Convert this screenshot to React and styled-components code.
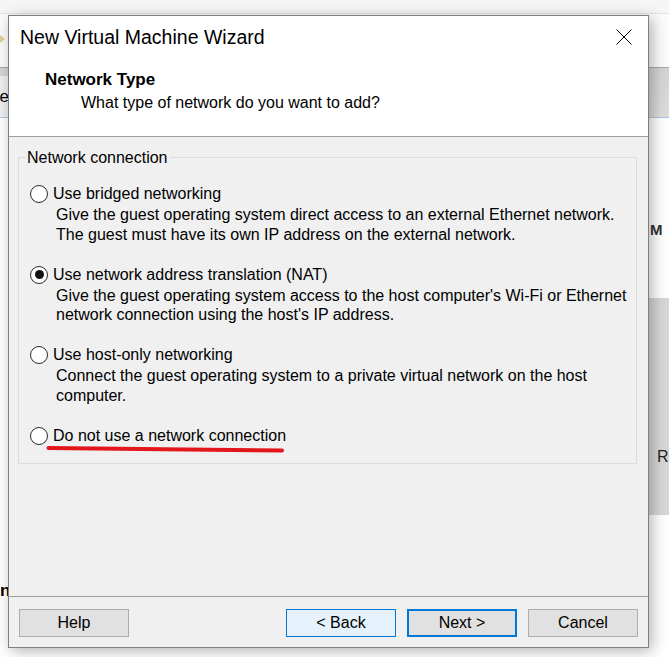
import React from 'react';
import styled, { createGlobalStyle } from 'styled-components';

const GlobalStyle = createGlobalStyle`
  html, body {
    margin: 0;
    padding: 0;
    background: #fff;
  }
  body {
    font-family: "Liberation Sans", Arial, sans-serif;
    color: #000;
  }
`;

const Desktop = styled.div`
  position: relative;
  width: 669px;
  height: 657px;
  overflow: hidden;
  background: #fff;
`;

/* the host application behind the wizard */
const HostApp = styled.div`
  display: flex;
  flex-direction: column;
  height: 100%;
`;

const MenuStrip = styled.div`
  height: 13px;
  background: #f6f6f6;
  border-bottom: 1px solid #e4e4e4;
`;

const AddressRow = styled.div`
  height: 53px;
  display: flex;
  align-items: center;
  padding-bottom: 4px;
  box-sizing: border-box;
  background: #fbfbfb;
`;

const TabBand = styled.div`
  height: 49px;
  display: flex;
  background: linear-gradient(#d3d3d3, #dcdcdc);
  border-top: 1px solid #a8a8a8;
  border-bottom: 1px solid #a9c6e2;
`;

const Tab = styled.div`
  width: 9px;
  margin-top: 8px;
  background: #efefef;
  display: flex;
  align-items: center;
  justify-content: flex-end;
  font-size: 17px;
`;

const HostBody = styled.div`
  flex: 1;
  display: flex;
`;

const LeftRail = styled.div`
  width: 14px;
  display: flex;
  flex-direction: column;
  padding-top: 462px;
  font-weight: bold;
  font-size: 17px;
  line-height: 22px;
`;

const RightRail = styled.div`
  margin-left: auto;
  width: 20px;
  display: flex;
  flex-direction: column;
  padding-top: 102px;
`;

const RailLabel = styled.div`
  font-size: 15px;
  font-weight: bold;
  line-height: 20px;
  color: #333;
  padding-left: 1px;
`;

const RailPanel = styled.div`
  margin-top: 58px;
  height: 217px;
  background: #d6d6d6;
  padding: 149px 0 0 8px;
  box-sizing: border-box;
  font-size: 16px;
  line-height: 20px;
  color: #222;
`;

/* wizard dialog, floating above the host window */
const Wizard = styled.div`
  position: absolute;
  left: 8px;
  top: 15px;
  width: 639px;
  height: 631px;
  border: 1px solid #7f7f7f;
  background: #f0f0f0;
  display: flex;
  flex-direction: column;
  box-shadow: 3px 3px 14px rgba(0, 0, 0, 0.3);
`;

const Header = styled.div`
  background: #fff;
  border-bottom: 1px solid #a0a0a0;
`;

const TitleBar = styled.div`
  height: 42px;
  display: flex;
  align-items: center;
  justify-content: space-between;
  padding-left: 11px;
  font-size: 19.5px;
`;

const CloseButton = styled.div`
  width: 48px;
  height: 42px;
  display: flex;
  align-items: center;
  justify-content: center;
`;

const PageInfo = styled.div`
  padding: 12px 0 23px 36px;
`;

const PageTitle = styled.div`
  font-weight: bold;
  font-size: 17px;
  line-height: 20px;
`;

const PageSubtitle = styled.div`
  margin: 3px 0 0 36px;
  font-size: 16px;
  line-height: 20px;
`;

const Content = styled.div`
  flex: 1;
  padding: 20px 11px 0 9px;
`;

const GroupBox = styled.div`
  border: 1px solid #dcdcdc;
  font-size: 16px;
`;

const GroupLabel = styled.div`
  display: table;
  margin: -10px 0 0 8px;
  padding-right: 2px;
  line-height: 19px;
  background: #f0f0f0;
`;

const OptionList = styled.div`
  display: flex;
  flex-direction: column;
  gap: 20.5px;
  padding: 17px 0 17px 11px;
`;

const Option = styled.div`
  position: relative;
`;

const OptionRow = styled.div`
  display: flex;
  align-items: center;
  gap: 5px;
  height: 20px;
`;

const Radio = styled.span`
  width: 16px;
  height: 16px;
  border: 1px solid #2b2b2b;
  border-radius: 50%;
  background: #fff;
  display: flex;
  align-items: center;
  justify-content: center;

  &::after {
    content: '';
    width: 9px;
    height: 9px;
    border-radius: 50%;
    background: #111;
    display: ${(p) => (p.$checked ? 'block' : 'none')};
  }
`;

const Description = styled.div`
  margin: 1px 0 0 26px;
  line-height: 19.5px;
  white-space: nowrap;
`;

const Underline = styled.svg`
  position: absolute;
  left: 16px;
  top: 19px;
`;

const Footer = styled.div`
  display: flex;
  align-items: center;
  gap: 11px;
  padding: 12px 10px 10px;
  border-top: 1px solid #a0a0a0;
`;

const Spacer = styled.div`
  flex: 1;
`;

const Button = styled.div`
  width: 110px;
  height: 28px;
  box-sizing: border-box;
  display: flex;
  align-items: center;
  justify-content: center;
  font-size: 16px;
  background: ${(p) => (p.$hover ? '#e5f1fb' : '#e1e1e1')};
  border: ${(p) => (p.$default ? '2px solid #0078d7' : p.$hover ? '1px solid #0078d7' : '1px solid #adadad')};
`;

const options = [
  {
    label: 'Use bridged networking',
    lines: [
      'Give the guest operating system direct access to an external Ethernet network.',
      'The guest must have its own IP address on the external network.',
    ],
  },
  {
    label: 'Use network address translation (NAT)',
    checked: true,
    lines: [
      "Give the guest operating system access to the host computer's Wi-Fi or Ethernet",
      "network connection using the host's IP address.",
    ],
  },
  {
    label: 'Use host-only networking',
    lines: ['Connect the guest operating system to a private virtual network on the host', 'computer.'],
  },
  {
    label: 'Do not use a network connection',
    marked: true,
    lines: [],
  },
];

export default function App() {
  return (
    <>
      <GlobalStyle />
      <Desktop>
        <HostApp>
          <MenuStrip />
          <AddressRow>
            <svg width="6" height="8" viewBox="0 0 6 8">
              <path d="M0 0 L5 4 L0 8 Z" fill="#d9cf9a" />
            </svg>
          </AddressRow>
          <TabBand>
            <Tab>e</Tab>
          </TabBand>
          <HostBody>
            <LeftRail>n</LeftRail>
            <RightRail>
              <RailLabel>M</RailLabel>
              <RailPanel>R</RailPanel>
            </RightRail>
          </HostBody>
        </HostApp>

        <Wizard>
          <Header>
            <TitleBar>
              New Virtual Machine Wizard
              <CloseButton>
                <svg width="16" height="16" viewBox="0 0 16 16">
                  <path d="M0.5 0.5 L15.5 15.5 M15.5 0.5 L0.5 15.5" stroke="#000" strokeWidth="1" />
                </svg>
              </CloseButton>
            </TitleBar>
            <PageInfo>
              <PageTitle>Network Type</PageTitle>
              <PageSubtitle>What type of network do you want to add?</PageSubtitle>
            </PageInfo>
          </Header>

          <Content>
            <GroupBox>
              <GroupLabel>Network connection</GroupLabel>
              <OptionList>
                {options.map((opt) => (
                  <Option key={opt.label}>
                    <OptionRow>
                      <Radio $checked={opt.checked} />
                      {opt.label}
                    </OptionRow>
                    {opt.lines.length > 0 && (
                      <Description>
                        {opt.lines.map((line) => (
                          <div key={line}>{line}</div>
                        ))}
                      </Description>
                    )}
                    {opt.marked && (
                      <Underline width="240" height="9" viewBox="0 0 240 9">
                        <path
                          d="M2.5 3 C70 3.5 150 4.5 236 5.5"
                          fill="none"
                          stroke="#e3161c"
                          strokeWidth="4"
                          strokeLinecap="round"
                        />
                      </Underline>
                    )}
                  </Option>
                ))}
              </OptionList>
            </GroupBox>
          </Content>

          <Footer>
            <Button>Help</Button>
            <Spacer />
            <Button $hover>&lt; Back</Button>
            <Button $default>Next &gt;</Button>
            <Button>Cancel</Button>
          </Footer>
        </Wizard>
      </Desktop>
    </>
  );
}
